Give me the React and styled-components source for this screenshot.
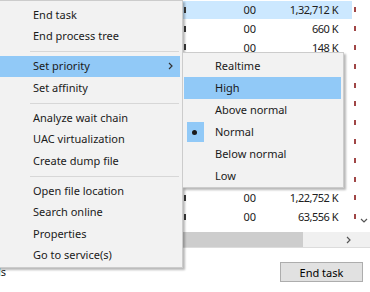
import React from "react";
import styled, { createGlobalStyle } from "styled-components";

const Global = createGlobalStyle`
  html, body { margin: 0; padding: 0; background: #fff; }
  body { font-family: "Noto Sans", "Open Sans", sans-serif; font-size: 11px; color: #1a1a1a; }
`;

const Window = styled.div`
  position: relative;
  width: 370px;
  height: 292px;
  overflow: hidden;
  background: #fff;
  display: flex;
  flex-direction: column;
`;

const TableArea = styled.div`
  height: 232px;
  display: flex;
  overflow: hidden;
`;

const TableBody = styled.div`
  width: 357px;
  padding-top: 0.5px;
`;

const Row = styled.div`
  height: 18.8px;
  display: grid;
  grid-template-columns: 184px 3px 72px 82px 13px 2px 1fr;
  align-items: center;
  background: ${(p) => (p.$selected ? "linear-gradient(#cce8ff, #cce8ff)" : "none")};
  background-size: 352px 100%;
  background-repeat: no-repeat;
`;

const DarkMark = styled.span`
  grid-column: 2;
  width: 2px;
  height: 6px;
  background: #3a3a3a;
`;

const Cell = styled.span`
  text-align: right;
  padding-right: 3px;
  white-space: nowrap;
  color: #202020;
  letter-spacing: ${(p) => (p.$tight ? "-0.5px" : "0")};
`;

const RedMark = styled.span`
  grid-column: 6;
  width: 1.5px;
  height: 5px;
  background: #a04646;
`;

const VScroll = styled.div`
  flex: 1;
  display: flex;
  flex-direction: column;
  justify-content: flex-end;
  align-items: center;
  padding-bottom: 7px;
`;

const HScroll = styled.div`
  height: 15px;
  display: flex;
  border-bottom: 1px solid #dcdcdc;
  background: #f0f0f0;
`;

const Thumb = styled.div`
  width: 303px;
  background: #cdcdcd;
`;

const Track = styled.div`
  flex: 1;
  display: flex;
  align-items: center;
  justify-content: flex-end;
  padding-right: 17px;
  padding-top: 1px;
`;

const Footer = styled.div`
  flex: 1;
  display: flex;
  align-items: flex-start;
  justify-content: space-between;
  padding-top: 14px;
  padding-right: 7px;
`;

const DetailsLink = styled.span`
  margin-left: -62px;
  margin-top: 2px;
  font-size: 11px;
  color: #1a1a1a;
  white-space: nowrap;
`;

const Button = styled.button`
  width: 83px;
  height: 20px;
  padding: 0;
  border: 1px solid #adadad;
  background: #e1e1e1;
  font-family: "Noto Sans", "Open Sans", sans-serif;
  font-size: 11px;
  color: #000;
  line-height: 17px;
`;

const Menu = styled.div`
  position: absolute;
  left: ${(p) => p.$left}px;
  top: ${(p) => p.$top}px;
  width: ${(p) => p.$width}px;
  box-sizing: border-box;
  background: #f2f2f2;
  border: 1px solid #cccccc;
  padding: ${(p) => p.$pad};
  box-shadow: 2px 2px 2px rgba(0, 0, 0, 0.28);
  display: flex;
  flex-direction: column;
`;

const Item = styled.div`
  position: relative;
  height: ${(p) => p.$h}px;
  display: flex;
  align-items: center;
  padding-left: ${(p) => p.$indent}px;
  padding-right: 5px;
  background: ${(p) => (p.$hover ? "#91c9f7" : "transparent")};
  white-space: nowrap;
  color: #1a1a1a;
`;

const Label = styled.span`
  flex: 1;
  margin-top: -1px;
`;

const Separator = styled.div`
  height: 1px;
  background: #d7d7d7;
  margin: 4px 1px 3.5px 57px;
`;

const CheckBox = styled.span`
  position: absolute;
  left: 3px;
  top: 1px;
  width: 17px;
  height: 20px;
  background: #91c9f7;
  display: flex;
  align-items: center;
  justify-content: center;
`;

const Bullet = styled.span`
  width: 5px;
  height: 5px;
  border-radius: 50%;
  background: #1a1a1a;
  margin-left: -3px;
`;

const Chevron = ({ dir = "right", size = 7, color = "#333" }) => {
  const d = dir === "right" ? "M2 1 L5 4 L2 7" : "M1 2 L4 5 L7 2";
  return (
    <svg width={size + 1} height={size + 1} viewBox="0 0 8 8" style={{ display: "block" }}>
      <path d={d} fill="none" stroke={color} strokeWidth="1.2" />
    </svg>
  );
};

// Rows hidden behind the priority submenu carry no visible values.
const rows = [
  "1,32,712 K",
  "660 K",
  "148 K",
  null,
  null,
  null,
  null,
  null,
  null,
  null,
  "1,22,752 K",
  "63,556 K",
];

const mainItems = [
  ["End task"],
  ["End process tree"],
  "sep",
  ["Set priority", true, true],
  ["Set affinity"],
  "sep",
  ["Analyze wait chain"],
  ["UAC virtualization"],
  ["Create dump file"],
  "sep",
  ["Open file location"],
  ["Search online"],
  ["Properties"],
  ["Go to service(s)"],
];

const priorities = ["Realtime", "High", "Above normal", "Normal", "Below normal", "Low"];

export default function App() {
  return (
    <>
      <Global />
      <Window>
        <TableArea>
          <TableBody>
            {rows.map((mem, i) => (
              <Row key={i} $selected={i === 0}>
                <span />
                <DarkMark />
                <Cell>{mem ? "00" : ""}</Cell>
                <Cell $tight>{mem || ""}</Cell>
                <span />
                <RedMark />
              </Row>
            ))}
          </TableBody>
          <VScroll>
            <Chevron dir="down" size={7} color="#555" />
          </VScroll>
        </TableArea>
        <HScroll>
          <Thumb />
          <Track>
            <Chevron dir="right" size={7} color="#555" />
          </Track>
        </HScroll>
        <Footer>
          <DetailsLink>Fewer details</DetailsLink>
          <Button>End task</Button>
        </Footer>

        <Menu $left={-30} $top={0} $width={213} $pad="3px 2px 1px 2px">
          {mainItems.map((it, i) =>
            it === "sep" ? (
              <Separator key={i} />
            ) : (
              <Item key={i} $h={21.5} $indent={60} $hover={it[2]}>
                <Label>{it[0]}</Label>
                {it[1] && <Chevron dir="right" size={7} color="#333" />}
              </Item>
            )
          )}
        </Menu>

        <Menu $left={182} $top={52} $width={162} $pad="2px 2px 0 1px">
          {priorities.map((p) => (
            <Item key={p} $h={22} $indent={31} $hover={p === "High"}>
              {p === "Normal" && (
                <CheckBox>
                  <Bullet />
                </CheckBox>
              )}
              <Label>{p}</Label>
            </Item>
          ))}
        </Menu>
      </Window>
    </>
  );
}
